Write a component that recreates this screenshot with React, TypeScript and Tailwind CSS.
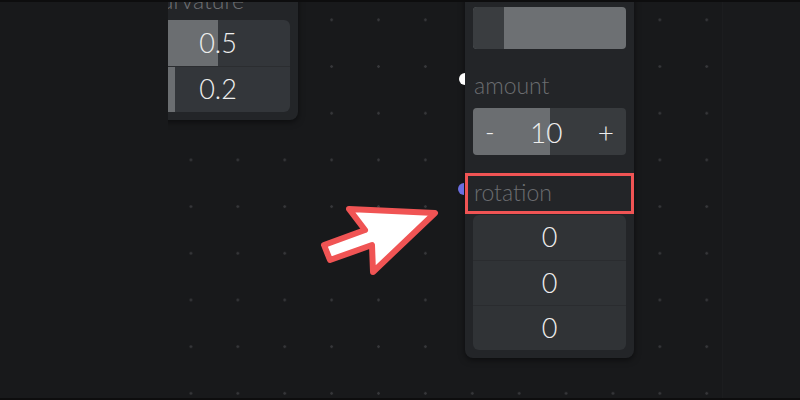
import React from "react";

const font = { fontFamily: "Lato, 'Noto Sans', sans-serif" };

function Arrow() {
  return (
    <svg className="absolute left-0 top-0" width="800" height="400" viewBox="0 0 800 400">
      <polygon
        points="435,211 349,207 365,228 324,243 330,258 372,243 373,270"
        fill="#ffffff"
        stroke="#f05454"
        strokeWidth="6"
        strokeLinejoin="round"
      />
    </svg>
  );
}

function LeftNode() {
  const rows = [0.5, 0.2];
  return (
    <div className="absolute left-[-30px] top-[-28px] w-[160px] rounded-lg bg-[#232528] px-2 pb-2 shadow-[0_2px_6px_rgba(0,0,0,0.5)]">
      <div className="h-[42px] pl-1 flex items-end text-[23px] leading-[23px] text-[#6e7073] font-light pb-[4px]">curvature</div>
      <div className="mt-[4px] flex flex-col overflow-hidden rounded-md bg-[#33363a]">
        {rows.map((v, i) => (
          <div key={i} className={`relative h-[46px] flex items-center justify-center ${i > 0 ? "border-t border-[#2b2d30]" : ""}`}>
            <div className="absolute left-0 top-0 bottom-0 bg-[#6b6e71]" style={{ width: `${v * 100}%` }} />
            <span className="relative text-[27px] font-light text-[#eeeeee]">{v}</span>
          </div>
        ))}
      </div>
    </div>
  );
}

function RightNode() {
  return (
    <div className="absolute left-[297px] top-[-22px] w-[169px] rounded-lg bg-[#232528] px-2 pb-2 shadow-[0_2px_6px_rgba(0,0,0,0.5)]">
      <div className="mt-[27px] h-[42px] rounded-[4px] bg-[#6d7073] flex overflow-hidden">
        <div className="w-[31px] bg-[#3a3d40]" />
      </div>
      <div className="relative h-[59px] flex items-center pl-[1px] text-[23px] font-light text-[#6b6d70]">
        <span className="mt-[14px]">amount</span>
        <div className="absolute left-[-14px] top-[24px] w-[12px] h-[12px] rounded-full bg-white [clip-path:inset(0_50%_0_0)]" />
      </div>
      <div className="relative h-[47px] rounded-[4px] bg-[#383b3e] overflow-hidden flex items-center">
        <div className="absolute left-0 top-0 bottom-0 w-1/2 bg-[#6b6e71]" />
        <div className="relative flex w-full items-center justify-between px-[12px] text-[#eeeeee] font-light">
          <span className="text-[26px]">-</span>
          <span className="text-[28px]">10</span>
          <span className="text-[28px]">+</span>
        </div>
      </div>
      <div className="relative mt-[18px] h-[41px] -mx-2 border-[3px] border-[#f05454] flex items-center pl-[6px] text-[23px] font-light text-[#6b6d70]">
        <span className="-mt-[3px]">rotation</span>
        <div className="absolute left-[-10px] top-[7px] w-[12px] h-[12px] rounded-full bg-[#6b6ee0] [clip-path:inset(0_50%_0_0)]" />
      </div>
      <div className="mt-[1px] rounded-md bg-[#303336] overflow-hidden flex flex-col">
        {[0, 0, 0].map((v, i) => (
          <div key={i} className={`h-[45px] flex items-center justify-center text-[27px] font-light text-[#eeeeee] ${i > 0 ? "border-t border-[#2a2c2f]" : ""}`}>
            {v}
          </div>
        ))}
      </div>
    </div>
  );
}

export default function App() {
  return (
    <div style={font} className="w-[800px] h-[400px] overflow-hidden bg-[#0d0d0e] py-[2px]">
      <div className="relative flex h-full w-full bg-[#18191b]">
        <div className="w-[168px] shrink-0 bg-[#18191b] z-10" />
        <div className="relative flex-1 overflow-hidden bg-[#18191b] bg-[radial-gradient(circle,#36373a_1px,transparent_1.6px)] bg-[length:46.9px_46.7px] bg-[position:-0.5px_-5.5px]">
          <LeftNode />
          <RightNode />
        </div>
        <div className="w-[78px] shrink-0 bg-[#191a1c] border-l border-[#1c1d1f]" />
        <div className="pointer-events-none absolute inset-0 z-20">
          <Arrow />
        </div>
      </div>
    </div>
  );
}
